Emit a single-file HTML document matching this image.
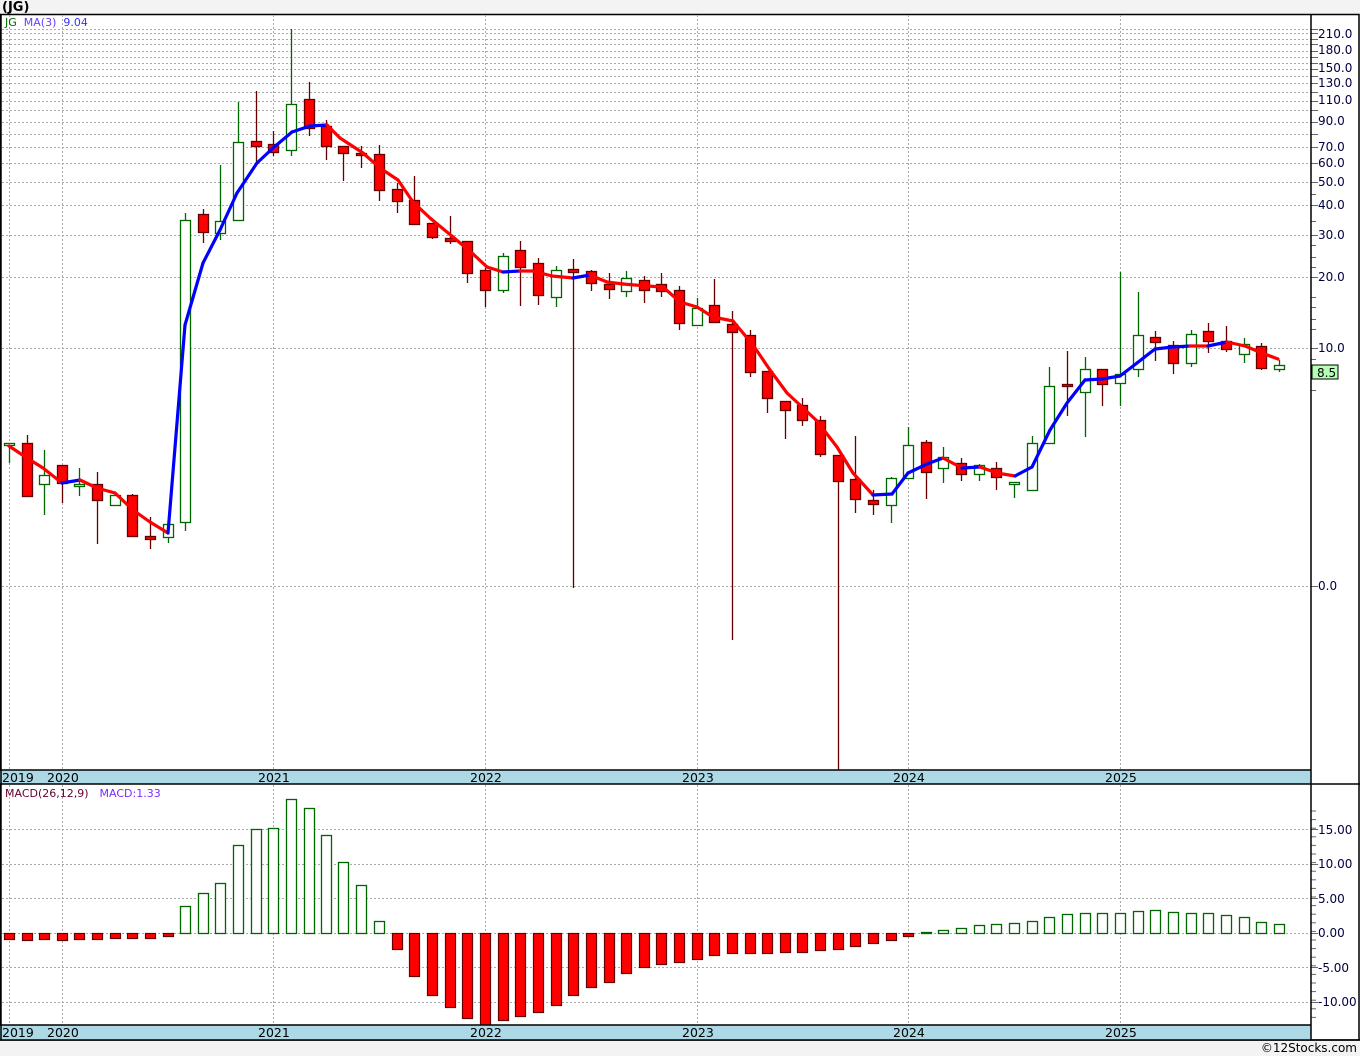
<!DOCTYPE html>
<html><head><meta charset="utf-8"><style>
html,body{margin:0;padding:0;background:#f3f3f3;}
svg{display:block;font-family:"DejaVu Sans","Liberation Sans",sans-serif;}
</style></head><body>
<svg id="s" width="1360" height="1056" viewBox="0 0 1360 1056" xmlns="http://www.w3.org/2000/svg">
<rect x="0" y="0" width="1360" height="1056" fill="#f3f3f3"/>
<rect x="0.5" y="14.5" width="1358.5" height="1025.5" fill="#fff" stroke="#000" stroke-width="1.5"/>
<g id="grid" stroke="#a8a8a8" stroke-width="1" stroke-dasharray="2,2" fill="none"></g>
<g id="ticks" stroke="#666" stroke-width="1"></g>
<g id="cand"></g>
<g id="ma" fill="none" stroke-width="3.2" stroke-linecap="round" stroke-linejoin="round"></g>
<g id="macd"></g>
<rect x="0" y="770" width="1311" height="14" fill="#add8e6"/>
<rect x="0" y="1025" width="1311" height="15" fill="#add8e6"/>
<line x1="0" y1="770" x2="1311" y2="770" stroke="#000" stroke-width="1.5"/>
<line x1="0" y1="784" x2="1360" y2="784" stroke="#000" stroke-width="1.5"/>
<line x1="0" y1="1025" x2="1311" y2="1025" stroke="#000" stroke-width="1.5"/>
<line x1="0" y1="1040" x2="1360" y2="1040" stroke="#000" stroke-width="1.5"/>
<line x1="1311" y1="14" x2="1311" y2="1040" stroke="#000" stroke-width="1.5"/>
<line x1="1" y1="14" x2="1" y2="1040" stroke="#000" stroke-width="1.5"/>
<g font-size="12.5" fill="#000">
<text x="2" y="782">2019</text><text x="47" y="782">2020</text><text x="258" y="782">2021</text><text x="470" y="782">2022</text><text x="682" y="782">2023</text><text x="893" y="782">2024</text><text x="1105" y="782">2025</text>
<text x="2" y="1037">2019</text><text x="47" y="1037">2020</text><text x="258" y="1037">2021</text><text x="470" y="1037">2022</text><text x="682" y="1037">2023</text><text x="893" y="1037">2024</text><text x="1105" y="1037">2025</text>
</g>
<text x="2" y="11" font-size="13" font-weight="bold" fill="#000">(JG)</text>
<text x="5" y="26" font-size="11"><tspan fill="#006600">JG</tspan><tspan fill="#6a3cff" dx="7">MA(3)</tspan><tspan fill="#3333ff" dx="7">9.04</tspan></text>
<text x="5" y="797" font-size="11"><tspan fill="#660033">MACD(26,12,9)</tspan><tspan fill="#7a2cff" dx="11">MACD:1.33</tspan></text>
<g font-size="12" fill="#000040" id="lbl">
<text x="1318" y="38">210.0</text><text x="1318" y="54">180.0</text><text x="1318" y="72">150.0</text><text x="1318" y="87">130.0</text><text x="1318" y="104">110.0</text><text x="1318" y="125">90.0</text><text x="1318" y="151">70.0</text><text x="1318" y="167">60.0</text><text x="1318" y="186">50.0</text><text x="1318" y="209">40.0</text><text x="1318" y="239">30.0</text><text x="1318" y="281">20.0</text><text x="1318" y="352">10.0</text><text x="1318" y="590">0.0</text>
<text x="1318" y="834">15.00</text><text x="1318" y="868">10.00</text><text x="1318" y="903">5.00</text><text x="1318" y="937">0.00</text><text x="1318" y="972">-5.00</text><text x="1318" y="1006">-10.00</text>
</g>
<rect x="1312" y="365" width="26" height="14" fill="#b3ffb3" stroke="#000" stroke-width="1"/>
<text x="1317" y="377" font-size="12" fill="#000">8.5</text>
<text x="1357" y="1052" font-size="12" fill="#000" text-anchor="end">©12Stocks.com</text>
</svg>
<script>
var NS="http://www.w3.org/2000/svg";
function el(p,t,a){var e=document.createElementNS(NS,t);for(var k in a)e.setAttribute(k,a[k]);document.getElementById(p).appendChild(e);return e;}
[29,33,39,44,51,57,63,69,76,83,92,101,110,122,134,147,163,182,205,235,277,348,586].forEach(function(y){el('grid','line',{x1:2,y1:y+.5,x2:1311,y2:y+.5});el('ticks','line',{x1:1311,y1:y+.5,x2:1318,y2:y+.5});});
[194,221,245,257,267,297,307,319,329,359,390].forEach(function(y){el('ticks','line',{x1:1311,y1:y+.5,x2:1316,y2:y+.5});});
[829,864,898,933,967,1002].forEach(function(y){el('grid','line',{x1:2,y1:y+.5,x2:1311,y2:y+.5});el('ticks','line',{x1:1311,y1:y+.5,x2:1318,y2:y+.5});});
for(var y=811;y<1025;y+=8.6){el('ticks','line',{x1:1311,y1:y,x2:1316,y2:y});}
[9,62,273,485,697,908,1120].forEach(function(x){el('grid','line',{x1:x+.5,y1:15,x2:x+.5,y2:770});el('grid','line',{x1:x+.5,y1:785,x2:x+.5,y2:1025});});
var C=[[9,443,443,445,463,1],[27,435,443,496,496,0],[44,450,475,484,515,1],[62,465,465,483,503,0],[79,468,484,485,496,1],[97,472,484,500,544,0],[115,495,495,505,505,1],[132,494,495,536,536,0],[150,517,536,539,549,0],[168,524,524,537,543,1],[185,213,220,522,531,1],[203,209,214,232,243,0],[220,165,221,233,240,1],[238,102,142,220,221,1],[256,91,141,146,163,0],[273,131,144,152,156,0],[291,29,104,150,156,1],[309,82,99,128,136,0],[326,120,126,146,160,0],[343,146,146,153,181,0],[361,146,153,155,168,0],[379,145,154,190,201,0],[397,183,189,201,213,0],[414,176,200,224,225,0],[432,223,223,237,239,0],[450,216,238,241,244,0],[467,241,241,273,283,0],[485,268,270,290,307,0],[503,253,256,290,293,1],[520,241,250,267,306,0],[538,258,263,295,305,0],[556,266,270,297,307,1],[573,259,269,272,588,0],[591,270,271,283,291,0],[609,273,284,289,299,0],[626,271,278,291,297,1],[644,276,280,290,303,0],[661,273,284,291,297,0],[679,286,290,323,330,0],[697,298,308,325,325,1],[714,279,305,322,322,0],[732,311,324,332,640,0],[750,330,335,372,377,0],[767,371,371,398,413,0],[785,401,401,410,439,0],[802,398,405,420,426,0],[820,416,420,454,457,0],[838,455,455,481,770,0],[855,436,479,499,513,0],[873,490,500,504,515,0],[891,477,478,505,523,1],[908,427,445,478,478,1],[926,440,442,472,499,0],[943,447,457,468,483,1],[961,458,463,474,481,0],[979,464,465,474,481,1],[996,462,468,477,490,0],[1014,482,482,484,498,1],[1032,436,443,490,490,1],[1049,367,386,443,443,1],[1067,351,384,386,416,0],[1085,357,369,392,437,1],[1102,369,369,384,406,0],[1120,272,374,383,406,1],[1138,292,335,369,377,1],[1155,331,337,342,361,0],[1173,341,345,363,374,0],[1191,330,334,363,367,1],[1208,323,331,341,353,0],[1226,326,341,349,352,0],[1244,338,344,354,363,1],[1261,343,346,368,370,0],[1279,360,365,369,372,1]];
C.forEach(function(c){var x=c[0],col=c[5]?'#006600':'#660000';
el('cand','line',{x1:x+.5,y1:c[1],x2:x+.5,y2:c[4],stroke:col,'stroke-width':1.3});
var h=Math.max(c[3]-c[2],2);
el('cand','rect',{x:x-4.5,y:c[2]+.5,width:10,height:h,fill:c[5]?'#fff':'#ff0000',stroke:c[5]?'#006600':'#660000','stroke-width':1.3});});
var M=[[9,446],[27,458],[43,468],[62,483],[80,480],[97,488],[115,493],[133,510],[150,522],[168,533],[185,325],[203,263],[220,230],[237,193],[257,163],[273,148],[292,132],[310,126],[327,125],[340,138],[363,153],[380,168],[398,180],[413,202],[430,218],[453,237],[472,253],[487,267],[503,272],[520,271],[533,271],[552,276],[573,278],[590,275],[607,282],[623,284],[647,286],[663,287],[680,302],[697,307],[713,317],[733,321],[753,345],[770,370],[787,393],[800,405],[817,421],[837,447],[853,473],[873,495],[892,494],[908,473],[927,464],[943,458],[962,468],[980,467],[997,473],[1015,476],[1032,467],[1050,430],[1067,403],[1085,380],[1102,379],[1120,376],[1137,363],[1155,349],[1173,347],[1190,346],[1208,346],[1227,342],[1245,346],[1262,353],[1278,359]];
for(var i=1;i<M.length;i++){var a=M[i-1],b=M[i];el('ma','line',{x1:a[0],y1:a[1],x2:b[0],y2:b[1],stroke:b[1]<a[1]?'#0000ff':'#ff0000'});}
var H=[939,940,939,940,939,939,938,938,938,936,906,893,883,845,829,828,799,808,835,862,885,921,949,976,995,1007,1018,1025,1020,1016,1012,1005,995,987,982,973,967,964,962,959,955,953,953,953,952,952,950,949,946,943,940,936,932,930,928,925,924,923,921,917,914,913,913,913,911,910,912,913,913,915,917,922,924];
H.forEach(function(v,i){var x=C[i][0];var z=933;
if(v>z){el('macd','rect',{x:x-4.5,y:z+.5,width:10,height:v-z,fill:'#ff0000',stroke:'#660000','stroke-width':1.2});}
else{el('macd','rect',{x:x-4.5,y:v+.5,width:10,height:z-v,fill:'#fff',stroke:'#006600','stroke-width':1.3});}});
</script>
</body></html>
